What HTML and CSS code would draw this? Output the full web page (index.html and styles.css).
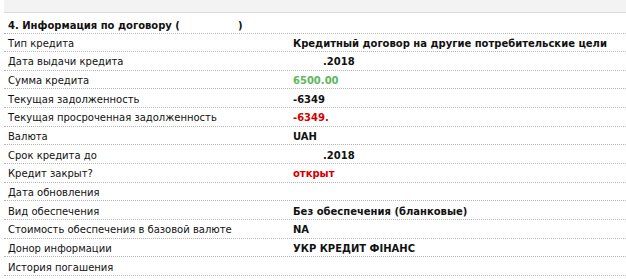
FILE: index.html
```html
<!DOCTYPE html>
<html lang="ru">
<head>
<meta charset="utf-8">
<link rel="stylesheet" href="styles.css">
</head>
<body>
<div class="page">
  <div class="topbar"></div>
  <div class="info">
    <div class="row head"><div class="title">4. Информация по договору (<span class="hidden">________</span>)</div></div>
    <div class="row"><div class="label">Тип кредита</div><div class="value">Кредитный договор на другие потребительские цели</div></div>
    <div class="row"><div class="label">Дата выдачи кредита</div><div class="value"><span class="blank"></span>.2018</div></div>
    <div class="row"><div class="label">Сумма кредита</div><div class="value green">6500.00</div></div>
    <div class="row"><div class="label">Текущая задолженность</div><div class="value">-6349</div></div>
    <div class="row"><div class="label">Текущая просроченная задолженность</div><div class="value red">-6349.</div></div>
    <div class="row"><div class="label">Валюта</div><div class="value">UAH</div></div>
    <div class="row"><div class="label">Срок кредита до</div><div class="value"><span class="blank"></span>.2018</div></div>
    <div class="row"><div class="label">Кредит закрыт?</div><div class="value red">открыт</div></div>
    <div class="row"><div class="label">Дата обновления</div><div class="value"></div></div>
    <div class="row"><div class="label">Вид обеспечения</div><div class="value">Без обеспечения (бланковые)</div></div>
    <div class="row"><div class="label">Стоимость обеспечения в базовой валюте</div><div class="value">NA</div></div>
    <div class="row"><div class="label">Донор информации</div><div class="value">УКР КРЕДИТ ФІНАНС</div></div>
    <div class="row"><div class="label">История погашения</div><div class="value"></div></div>
  </div>
</div>
</body>
</html>
```
FILE: styles.css
```css
html, body {
  margin: 0;
  padding: 0;
  background: #ffffff;
}
.page {
  font-family: "DejaVu Sans", Verdana, sans-serif;
  font-size: 10px;
  color: #111;
}
.topbar {
  height: 12px;
  margin-left: 4px;
  background: #f3f3f3;
  border-bottom: 1px solid #dadada;
}
.info {
  margin-left: 4px;
}
.row {
  display: grid;
  grid-template-columns: 285px 1fr;
  height: 18.67px;
  box-sizing: border-box;
  border-bottom: 1px dotted #b5b5b5;
  align-items: center;
}
.row.head {
  height: 20.5px;
  display: flex;
}
.title {
  font-weight: bold;
  padding-left: 4px;
  padding-top: 5px;
}
.hidden {
  color: transparent;
  display: inline-block;
  width: 58px;
  overflow: hidden;
  vertical-align: bottom;
}
.label {
  padding-left: 4px;
  padding-top: 2px;
  white-space: nowrap;
}
.value {
  font-weight: bold;
  padding-left: 4px;
  padding-top: 2px;
  white-space: nowrap;
}
.blank {
  display: inline-block;
  width: 30px;
}
.green { color: #5cb85c; }
.red { color: #d40000; }
```
